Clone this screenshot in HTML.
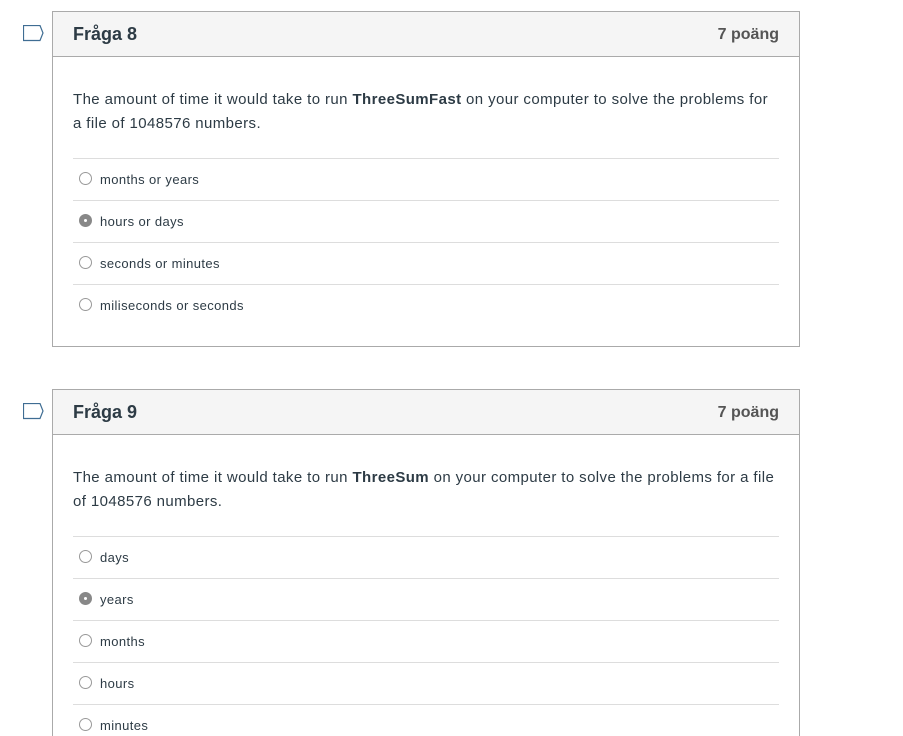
<!DOCTYPE html>
<html style="width:903px;height:736px;overflow:hidden"><head><meta charset="utf-8"><style>
body{margin:0;width:903px;height:736px;overflow:hidden;background:#fff;font-family:"Liberation Sans",sans-serif;color:#2d3b45;position:relative}
.card{position:absolute;left:52px;width:746px;border:1px solid #aaa;background:#fff}
.hd{height:44px;background:#f5f5f5;border-bottom:1px solid #aaa;position:relative}
.hd .t{position:absolute;left:20px;top:12px;font-size:18px;font-weight:bold}
.hd .p{position:absolute;right:20px;top:14px;font-size:16px;font-weight:bold;color:#555}
.q{position:absolute;left:20px;width:720px;font-size:15px;line-height:24px;letter-spacing:0.4px;white-space:nowrap}
.opt{position:absolute;left:20px;width:706px;height:41px;border-top:1px solid #ddd;font-size:13px;letter-spacing:0.4px}
.opt span{position:absolute;left:27px;top:13px}
.r{position:absolute;left:6px;top:13px;width:13px;height:13px;border:1px solid #999;border-radius:50%;box-sizing:border-box;background:#fff}
.r.on{background:#888;border-color:#888}
.r.on:after{content:"";position:absolute;left:4px;top:4px;width:3px;height:3px;border-radius:50%;background:#fff}
.flag{position:absolute;left:23px}
</style></head><body>
<svg class="flag" style="top:25px" width="21" height="17"><path d="M0.5 0.5H17L20 8L17 15.5H0.5Z" fill="none" stroke="#3f6d93" stroke-width="1.2"/></svg>
<div class="card" style="top:11px;height:334px">
<div class="hd"><div class="t">Fråga 8</div><div class="p">7 poäng</div></div>
<div class="q" style="top:76px">The amount of time it would take to run <b>ThreeSumFast</b> on your computer to solve the problems for<br>a file of 1048576 numbers.</div>
<div class="opt" style="top:146px"><i class="r"></i><span>months or years</span></div>
<div class="opt" style="top:188px"><i class="r on"></i><span>hours or days</span></div>
<div class="opt" style="top:230px"><i class="r"></i><span>seconds or minutes</span></div>
<div class="opt" style="top:272px"><i class="r"></i><span>miliseconds or seconds</span></div>
</div>
<svg class="flag" style="top:403px" width="21" height="17"><path d="M0.5 0.5H17L20 8L17 15.5H0.5Z" fill="none" stroke="#3f6d93" stroke-width="1.2"/></svg>
<div class="card" style="top:389px;height:346px;border-bottom:none;overflow:hidden">
<div class="hd"><div class="t">Fråga 9</div><div class="p">7 poäng</div></div>
<div class="q" style="top:76px">The amount of time it would take to run <b>ThreeSum</b> on your computer to solve the problems for a file<br>of 1048576 numbers.</div>
<div class="opt" style="top:146px"><i class="r"></i><span>days</span></div>
<div class="opt" style="top:188px"><i class="r on"></i><span>years</span></div>
<div class="opt" style="top:230px"><i class="r"></i><span>months</span></div>
<div class="opt" style="top:272px"><i class="r"></i><span>hours</span></div>
<div class="opt" style="top:314px"><i class="r"></i><span>minutes</span></div>
</div>
</body></html>
